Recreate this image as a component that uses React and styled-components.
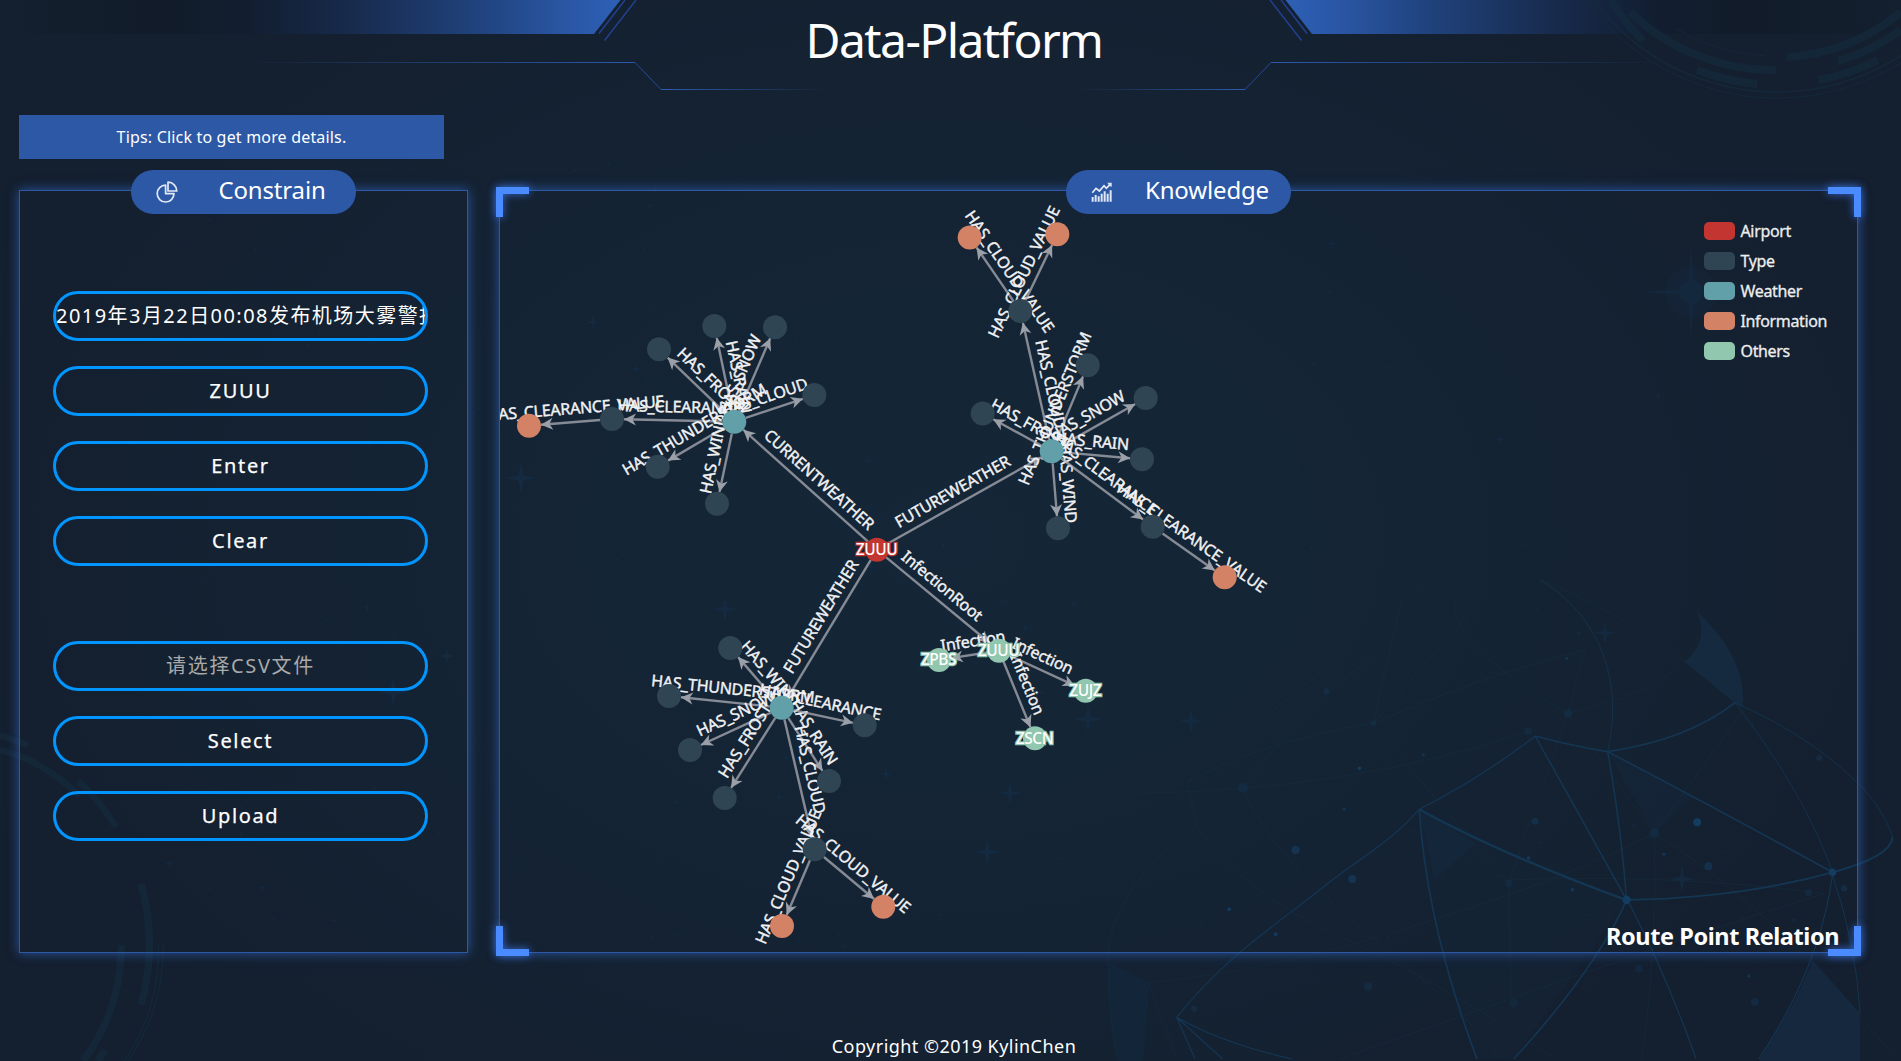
import React from 'react';
import styled, { createGlobalStyle } from 'styled-components';

const GlobalStyle = createGlobalStyle`
  * { box-sizing: border-box; }
  body {
    margin: 0;
    background: #141f2f;
    color: #fff;
    font-family: "Noto Sans", "Noto Sans CJK SC", sans-serif;
  }
`;

const Page = styled.div`
  position: relative;
  display: flex;
  flex-direction: column;
  width: 1901px;
  height: 1061px;
  overflow: hidden;
  background: radial-gradient(ellipse 1050px 720px at 950px 540px, #142637 0%, #142435 45%, #142131 78%, #141f2f 100%);
`;

const Art = styled.svg`
  position: absolute;
  inset: 0;
  pointer-events: none;
`;

const Header = styled.header`
  position: relative;
  height: 115px;
  display: flex;
  justify-content: center;
`;

const Title = styled.h1`
  margin: 7px 0 0 7px;
  font-size: 48px;
  line-height: 66px;
  font-weight: 400;
  letter-spacing: -1.6px;
`;

const Tips = styled.div`
  position: relative;
  display: flex;
  align-items: center;
  justify-content: center;
  width: 425px;
  height: 44px;
  margin-left: 19px;
  background: #2c58a6;
  font-size: 16px;
  letter-spacing: 0.18px;
`;

const Main = styled.main`
  position: relative;
  display: flex;
  gap: 31px;
  margin: 31px 0 0 19px;
  height: 763px;
`;

const Panel = styled.section`
  position: relative;
  width: ${(p) => p.$width}px;
  height: 100%;
  border: 1px solid #2c58a6;
  box-shadow: 0 0 11px rgba(44, 88, 166, 0.95);
`;

const Pill = styled.h2`
  position: absolute;
  z-index: 2;
  top: -21px;
  left: 50%;
  display: flex;
  align-items: center;
  width: 225px;
  height: 44px;
  margin: 0 0 0 -112.5px;
  border-radius: 22px;
  background: #2c58a6;
  font-size: 24px;
  line-height: 44px;
  font-weight: 400;
  letter-spacing: -0.15px;
`;

const PillIcon = styled.svg`
  width: 22px;
  height: 22px;
  margin: 0 10px 0 25px;
`;

const PillText = styled.span`
  flex: 1;
  text-align: center;
  margin-top: -4px;
`;

const Form = styled.div`
  display: flex;
  flex-direction: column;
  gap: 75px;
  padding: 100px 0 0 33px;
`;

const Group = styled.div`
  display: flex;
  flex-direction: column;
  gap: 25px;
`;

const Field = styled.div`
  display: flex;
  justify-content: ${(p) => (p.$start ? 'flex-start' : 'center')};
  width: 375px;
  height: 50px;
  border: 3px solid #0095ff;
  border-radius: 25px;
  overflow: hidden;
  color: ${(p) => (p.$muted ? '#a9a9a9' : '#fff')};
  font-size: 20px;
  line-height: 43px;
  letter-spacing: ${(p) => (p.$start ? 1.45 : 1.65)}px;
  -webkit-text-stroke: ${(p) => (p.$muted || p.$start ? 0 : 0.25)}px #fff;
  white-space: nowrap;
`;

const Corner = styled.i`
  position: absolute;
  z-index: 1;
  width: 33px;
  height: 30px;
  border: 0 solid #4a8cff;
  filter: drop-shadow(0 0 4px rgba(60, 120, 240, 0.85));
  ${(p) => p.$v}: -4px;
  ${(p) => p.$h}: -4px;
  border-${(p) => p.$v}-width: 7px;
  border-${(p) => p.$h}-width: 7px;
`;

const Graph = styled.svg`
  position: absolute;
  inset: 0;
  width: 100%;
  height: 100%;
`;

const EdgeText = styled.text`
  fill: #f2f2f4;
  stroke: #f2f2f4;
  stroke-width: 0.4px;
  font-size: 16px;
  letter-spacing: -0.22px;
  text-anchor: middle;
`;

const NodeText = styled.text`
  fill: #fff;
  stroke-width: 2.5px;
  paint-order: stroke;
  font-size: 15.5px;
  font-weight: 500;
  letter-spacing: -0.45px;
  text-anchor: middle;
`;

const Legend = styled.ul`
  position: absolute;
  top: 29px;
  left: 1203.500px;
  display: flex;
  flex-direction: column;
  gap: 8px;
  margin: 0;
  padding: 0;
  list-style: none;
`;

const LegendItem = styled.li`
  display: flex;
  align-items: center;
  gap: 6px;
  height: 22px;
  color: #eee;
  font-size: 16px;
  letter-spacing: -0.35px;
  -webkit-text-stroke: 0.3px #eee;
  &::before {
    content: "";
    width: 31px;
    height: 18px;
    border-radius: 5px;
    background: ${(p) => p.$color};
  }
`;

const Caption = styled.div`
  position: absolute;
  right: 18px;
  bottom: 0;
  font-size: 23.5px;
  line-height: 32px;
  font-weight: 700;
  letter-spacing: -0.42px;
`;

const Footer = styled.footer`
  position: relative;
  margin: 80px 0 0 7px;
  text-align: center;
  font-size: 18px;
  line-height: 26px;
  letter-spacing: 0.46px;
`;

const COLORS = {
  airport: '#c23531',
  type: '#2f4554',
  weather: '#61a0a8',
  info: '#d48265',
  other: '#91c7ae',
};

const NODES = {
  root: [877, 549.7, 'airport', 'ZUUU'],
  n1: [734.3, 421.7, 'weather'],
  a1: [714.3, 326, 'type'],
  a2: [775, 327.3, 'type'],
  a3: [659, 349.3, 'type'],
  a4: [814.3, 395, 'type'],
  a5: [612, 419, 'type'],
  a6: [529, 425.7, 'info'],
  a7: [657.7, 466.7, 'type'],
  a8: [717, 503.7, 'type'],
  n2: [1051.7, 451.3, 'weather'],
  b1: [1020.3, 311, 'type'],
  b2: [969.7, 237.5, 'info'],
  b3: [1057.3, 234.2, 'info'],
  b4: [1087.7, 365.3, 'type'],
  b5: [1145.7, 398, 'type'],
  b6: [982.7, 413.5, 'type'],
  b7: [1142, 459.3, 'type'],
  b8: [1058, 528.3, 'type'],
  b9: [1152.7, 526.7, 'type'],
  b10: [1224.7, 577.3, 'info'],
  n3: [781.7, 707.7, 'weather'],
  c1: [730.3, 648, 'type'],
  c2: [669, 696, 'type'],
  c3: [690, 750, 'type'],
  c4: [724.7, 798, 'type'],
  c5: [829, 781, 'type'],
  c6: [864.7, 725.3, 'type'],
  c7: [814.7, 849.3, 'type'],
  c8: [782, 926, 'info'],
  c9: [883.3, 906.7, 'info'],
  d0: [999, 650.7, 'other', 'ZUUU'],
  d1: [939, 660, 'other', 'ZPBS'],
  d2: [1085.7, 690.7, 'other', 'ZUJZ'],
  d3: [1035, 738.3, 'other', 'ZSCN'],
};

const EDGES = [
  ['root', 'n1', 'CURRENTWEATHER'],
  ['root', 'n2', 'FUTUREWEATHER'],
  ['root', 'n3', 'FUTUREWEATHER'],
  ['root', 'd0', 'InfectionRoot'],
  ['n1', 'a1', 'HAS_RAIN'],
  ['n1', 'a2', 'HAS_SNOW'],
  ['n1', 'a3', 'HAS_FROST'],
  ['n1', 'a4', 'HAS_CLOUD'],
  ['n1', 'a5', 'HAS_CLEARANCE'],
  ['a5', 'a6', 'HAS_CLEARANCE_VALUE'],
  ['n1', 'a7', 'HAS_THUNDERSTORM'],
  ['n1', 'a8', 'HAS_WIND'],
  ['n2', 'b1', 'HAS_CLOUD'],
  ['b1', 'b2', 'HAS_CLOUD_VALUE'],
  ['b1', 'b3', 'HAS_CLOUD_VALUE'],
  ['n2', 'b4', 'HAS_THUNDERSTORM'],
  ['n2', 'b5', 'HAS_SNOW'],
  ['n2', 'b6', 'HAS_FROST'],
  ['n2', 'b7', 'HAS_RAIN'],
  ['n2', 'b8', 'HAS_WIND'],
  ['n2', 'b9', 'HAS_CLEARANCE'],
  ['b9', 'b10', 'HAS_CLEARANCE_VALUE'],
  ['n3', 'c1', 'HAS_WIND'],
  ['n3', 'c2', 'HAS_THUNDERSTORM'],
  ['n3', 'c3', 'HAS_SNOW'],
  ['n3', 'c4', 'HAS_FROST'],
  ['n3', 'c5', 'HAS_RAIN'],
  ['n3', 'c6', 'HAS_CLEARANCE'],
  ['n3', 'c7', 'HAS_CLOUD'],
  ['c7', 'c8', 'HAS_CLOUD_VALUE'],
  ['c7', 'c9', 'HAS_CLOUD_VALUE'],
  ['d0', 'd1', 'Infection'],
  ['d0', 'd2', 'Infection'],
  ['d0', 'd3', 'Infection'],
];

const R = 12;
const LEGEND = [
  ['Airport', COLORS.airport],
  ['Type', COLORS.type],
  ['Weather', COLORS.weather],
  ['Information', COLORS.info],
  ['Others', COLORS.other],
];

function Edge({ from, to, label }) {
  const [x1, y1] = NODES[from];
  const [tx, ty] = NODES[to];
  const len = Math.hypot(tx - x1, ty - y1);
  const ux = (tx - x1) / len;
  const uy = (ty - y1) / len;
  const x2 = tx - ux * R;
  const y2 = ty - uy * R;
  const deg = (Math.atan2(uy, ux) * 180) / Math.PI;
  const textDeg = ux < 0 ? deg + 180 : deg;
  return (
    <g>
      <g opacity="0.72">
        <line x1={x1 + ux * R} y1={y1 + uy * R} x2={x2} y2={y2} stroke="#b2b2ba" strokeWidth="2.4" />
        <path
          d="M0 0L-12 6L-8.500 0L-12 -6Z"
          fill="#cfcfd4"
          transform={`translate(${x2} ${y2}) rotate(${deg})`}
        />
      </g>
      <EdgeText transform={`translate(${(x1 + x2) / 2} ${(y1 + y2) / 2}) rotate(${textDeg})`} y="-8">
        {label}
      </EdgeText>
    </g>
  );
}

function KnowledgeGraph() {
  return (
    <Graph viewBox="500 191 1357 761">
      {EDGES.map(([from, to, label]) => (
        <Edge key={from + to} from={from} to={to} label={label} />
      ))}
      {Object.entries(NODES).map(([id, [x, y, kind, name]]) => (
        <g key={id}>
          <circle cx={x} cy={y} r={R} fill={COLORS[kind]} />
          {name && (
            <NodeText x={x - 0.5} y={y + 5.2} stroke={COLORS[kind]}>
              {name}
            </NodeText>
          )}
        </g>
      ))}
    </Graph>
  );
}

function makeStars(count) {
  let seed = 17;
  const next = () => {
    seed = (seed * 16807) % 2147483647;
    return seed / 2147483647;
  };
  return Array.from({ length: count }, () => {
    const x = 160 + next() * 1640;
    const y = 120 + next() * 830;
    const r = next() > 0.85 ? 5 : 1.5 + next() * 2;
    return [x, y, r];
  });
}

const STARS = [
  ...makeStars(190),
  [521, 478, 16], [593, 322, 8], [636, 369, 6], [725, 609, 14], [393, 692, 15],
  [447, 656, 9], [1037, 693, 9], [1088, 719, 15], [1010, 793, 13], [987, 852, 14],
  [886, 774, 8], [1191, 721, 13], [1605, 633, 12], [1682, 879, 14],
];

const star = ([x, y, r]) => {
  const k = r * 0.16;
  return `M${x} ${y - r}L${x + k} ${y - k}L${x + r} ${y}L${x + k} ${y + k}L${x} ${y + r}L${x - k} ${y + k}L${x - r} ${y}L${x - k} ${y - k}Z`;
};

const MESH_STRONG = [
  ['M625 748Q780 880 1030 1020', 3],
  ['M1030 1020Q1250 1015 1434 937Q1550 890 1552 830', 2.4],
  ['M852 528Q750 650 625 748', 1.5],
  ['M852 528Q930 560 994 575Q1150 540 1243 428', 2],
  ['M994 575Q1020 800 1031 1020L852 528', 1.8],
  ['M994 575Q1200 740 1434 937', 2],
  ['M625 748C560 860 500 900 430 990C330 1110 240 1200 150 1372', 1.5],
  ['M150 1372Q240 1450 375 1497M150 1372L240 1497M150 1372L186 1497', 1.5],
  ['M625 748Q640 1100 738 1497', 2],
  ['M1031 1020Q970 1230 810 1497', 2],
  ['M1036 1030Q1110 1250 1167 1497', 1.5],
  ['M1434 945Q1410 1220 1290 1497', 1.5],
  ['M1434 945Q1480 1150 1488 1360', 1.2],
  ['M862 60C960 150 1030 330 994 575', 1],
  ['M1243 428Q1380 700 1434 937', 1],
  ['M1243 428Q1380 520 1470 650Q1530 730 1552 830', 1],
];

const MESH_FAINT = [
  'M862 60Q1000 140 1145 305L1243 428',
  'M70 700Q500 690 838 515',
  'M170 665Q330 540 535 490Q760 340 950 270',
  'M170 665L460 300M170 665L190 800Q20 980 15 1200',
  'M280 685Q330 880 535 1135T780 1497',
  'M280 685Q430 380 545 290',
  'M535 490L590 120M535 490L740 130',
  'M695 130Q690 260 915 460Q1100 400 1175 260',
  'M915 460L950 270M915 460L1085 820L1260 450',
  'M915 460L800 970L805 1325',
  'M1085 820Q900 970 535 1135Q300 1240 95 1268',
  'M1085 820Q1090 1200 1060 1497',
  'M1085 820Q1300 1020 1560 1497',
  'M590 590Q700 800 800 970',
  'M805 960Q1100 940 1420 1000Q1200 1100 470 1497',
  'M95 1268L150 1497M15 1200Q20 1400 35 1497',
  'M190 800Q280 1000 470 1130T890 1497',
];

const DOTS = [
  [852, 784, 3.5, 0.5], [1169, 787, 4, 1], [1191, 919, 4, 0.6], [383, 870, 4, 0.7], [494, 957, 4, 0.7],
  [1031, 1020, 4.2, 1], [1434, 937, 3.8, 1], [1085, 820, 5, 0.3], [280, 683, 5, 0.3], [916, 460, 4.5, 0.3],
  [838, 513, 3.8, 0.3], [535, 490, 3, 0.3], [253, 1048, 1.8, 1], [344, 1123, 2, 0.9], [508, 625, 1.8, 1],
  [443, 394, 3, 0.4], [1457, 985, 3.2, 0.5], [1387, 998, 3.5, 0.35], [1282, 1326, 4, 0.4], [1055, 1226, 4, 0.3],
  [525, 1280, 4.2, 0.35], [810, 1328, 4.5, 0.2], [184, 1346, 3.2, 0.35], [839, 894, 1.8, 0.9],
  [925, 989, 1.8, 0.8], [1104, 883, 1.8, 0.7], [800, 970, 4, 0.25], [914, 295, 1.5, 0.8], [1408, 593, 3, 0.4],
  [633, 584, 1.5, 0.7], [478, 748, 1.5, 0.7], [1270, 1248, 1.8, 0.7],
];

function Background() {
  return (
    <Art width="1901" height="1061" viewBox="0 0 1901 1061" fill="none">
      <defs>
        <linearGradient id="band" x1="0" x2="1">
          <stop offset="0" stopColor="#121d2b" stopOpacity="0" />
          <stop offset="0.25" stopColor="#111b29" />
          <stop offset="0.4" stopColor="#121e30" />
          <stop offset="0.56" stopColor="#172a4b" />
          <stop offset="0.75" stopColor="#1f4078" />
          <stop offset="0.92" stopColor="#2a57a6" />
          <stop offset="1" stopColor="#2d60b6" />
        </linearGradient>
        <linearGradient id="rule" gradientUnits="userSpaceOnUse" x1="240" x2="635" y1="0" y2="0">
          <stop offset="0" stopColor="#2c58a6" stopOpacity="0" />
          <stop offset="1" stopColor="#2c58b0" />
        </linearGradient>
        <linearGradient id="base" gradientUnits="userSpaceOnUse" x1="661" x2="830" y1="0" y2="0">
          <stop offset="0" stopColor="#2c5cb4" />
          <stop offset="1" stopColor="#2c58a6" stopOpacity="0" />
        </linearGradient>
        <g id="wing">
          <path d="M0 0H620.5L594 34H0Z" fill="url(#band)" />
          <path d="M625 0L599 33.5M636 0L604.5 40.5" stroke="#233f90" strokeWidth="1.5" />
          <rect x="240" y="62" width="395" height="1" fill="url(#rule)" />
          <path d="M635 62.5L661 89.5" stroke="#28489a" strokeWidth="1" />
          <rect x="661" y="89" width="170" height="1" fill="url(#base)" />
        </g>
      </defs>

      <path d={STARS.map(star).join('')} fill="#14304c" opacity="0.5" />
      <g fill="#142b42" opacity="0.75">
        <circle cx="1691" cy="292" r="26" opacity="0.3" />
        <circle cx="1691" cy="292" r="12" />
        <path d="M1691 246L1694 289L1740 292L1694 295L1691 338L1688 295L1642 292L1688 289Z" />
      </g>

      <use href="#wing" />
      <use href="#wing" transform="translate(1906 0) scale(-1 1)" />

      <g stroke="#152a3c" opacity="0.75">
        <circle cx="1777" cy="-137" r="235" strokeWidth="1.2" />
        <circle cx="1777" cy="-137" r="229" strokeWidth="2" />
        <path d="M1697 70A221 221 0 0 0 1757 84M1819 80A221 221 0 0 0 1878 60" strokeWidth="8" />
        <path d="M1630 12A207 207 0 0 0 1776 70M1838 61A207 207 0 0 0 1901 30" strokeWidth="8" />
        <path d="M1787 57A194 194 0 0 0 1901 12" strokeWidth="8" />
        <path d="M1611 0A221 221 0 0 0 1643 41" strokeWidth="8" />
        <path d="M1675 28A194 194 0 0 0 1765 56" strokeWidth="1" />
      </g>
      <g stroke="#152a3b" opacity="0.75">
        <path d="M163 945A197 197 0 0 1 128 1061M158.500 945A193 193 0 0 1 124 1061" strokeWidth="1.5" />
        <path d="M141 884Q158 945 141 1005" strokeWidth="7.500" />
        <path d="M121.500 945Q121 1010 83 1061M105 1050L98 1061" strokeWidth="7.500" />
        <path d="M0 735L28 745M0 750Q42 760 80 796M78 781Q100 801 116 827" strokeWidth="6.500" />
      </g>

      <g transform="translate(1100 560) scale(0.5108 0.3333)">
        <g fill="#15304a">
          <path d="M1168 152Q1270 300 1258 445L1243 428L1145 305Q1195 240 1168 152Z" opacity="0.6" />
          <path d="M1395 1200L1488 1360V1503H1290Q1360 1340 1395 1200Z" opacity="0.55" />
          <path d="M15 1205L98 1268L85 1503H35Q10 1380 15 1205Z" opacity="0.3" />
          <path d="M994 575L1160 710L1085 820Z" opacity="0.2" />
          <path d="M625 748L735 850L655 960Z" opacity="0.2" />
          <path d="M625 748L1031 1020L810 1497H738Q640 1100 625 748Z" opacity="0.12" />
        </g>
        <g stroke="#17303f" strokeWidth="1" opacity="0.45">
          {MESH_FAINT.map((d) => (
            <path key={d} d={d} vectorEffect="non-scaling-stroke" />
          ))}
        </g>
        <g stroke="#143a59" opacity="0.85">
          {MESH_STRONG.map(([d, w]) => (
            <path key={d} d={d} strokeWidth={w * 0.8} vectorEffect="non-scaling-stroke" />
          ))}
        </g>
        <g fill="#143c5e">
          {DOTS.map(([x, y, r, o]) => (
            <ellipse key={`${x}-${y}`} cx={x} cy={y} rx={r * 1.958} ry={r * 3} opacity={o} />
          ))}
        </g>
      </g>
    </Art>
  );
}

function PieIcon() {
  return (
    <PillIcon viewBox="0 0 22 22" fill="none" stroke="#e3e9f6" strokeWidth="1.7" strokeLinejoin="round">
      <path d="M9.600 4.200A8.400 8.400 0 1 0 18 12.600H9.600Z" />
      <path d="M12 1.200A8.800 8.800 0 0 1 20.800 10H12Z" />
    </PillIcon>
  );
}

function TrendIcon() {
  return (
    <PillIcon viewBox="0 0 66 66" fill="#dfe6f5">
      <path d="M2 48h6v14H2zM11 42h6v20h-6zM20 46h6v16h-6zM29 38h6v24h-6zM38 31h6v31h-6zM47 38h6v24h-6zM56 28h6v34h-6z" />
      <path d="M4 35L15 22L25 30L39 14L46 22L57 11" fill="none" stroke="#e8edf8" strokeWidth="5" />
      <path d="M49 5H62V18L57 15L52 10Z" />
    </PillIcon>
  );
}

export default function App() {
  return (
    <Page>
      <GlobalStyle />
      <Background />
      <Header>
        <Title>Data-Platform</Title>
      </Header>
      <Tips>Tips: Click to get more details.</Tips>
      <Main>
        <Panel $width={449}>
          <Pill>
            <PieIcon />
            <PillText>Constrain</PillText>
          </Pill>
          <Form>
            <Group>
              <Field $start>2019年3月22日00:08发布机场大雾警报</Field>
              <Field>ZUUU</Field>
              <Field>Enter</Field>
              <Field>Clear</Field>
            </Group>
            <Group>
              <Field $muted>请选择CSV文件</Field>
              <Field>Select</Field>
              <Field>Upload</Field>
            </Group>
          </Form>
        </Panel>
        <Panel $width={1359}>
          <Corner $v="top" $h="left" />
          <Corner $v="top" $h="right" />
          <Corner $v="bottom" $h="left" />
          <Corner $v="bottom" $h="right" />
          <Pill>
            <TrendIcon />
            <PillText>Knowledge</PillText>
          </Pill>
          <KnowledgeGraph />
          <Legend>
            {LEGEND.map(([name, color]) => (
              <LegendItem key={name} $color={color}>
                {name}
              </LegendItem>
            ))}
          </Legend>
          <Caption>Route Point Relation</Caption>
        </Panel>
      </Main>
      <Footer>Copyright ©2019 KylinChen</Footer>
    </Page>
  );
}
